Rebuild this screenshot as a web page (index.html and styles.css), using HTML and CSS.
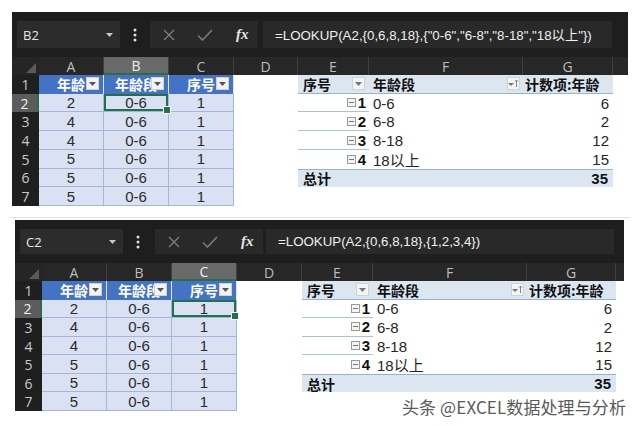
FILE: index.html
```html
<!DOCTYPE html>
<html lang="zh">
<head>
<meta charset="utf-8">
<title>LOOKUP</title>
<link rel="stylesheet" href="styles.css">
</head>
<body>
<section class="shot shot-top">
  <div class="fbar">
    <div class="namebox"><span>B2</span><svg class="caret" width="7" height="4" viewBox="0 0 7 4"><path d="M0 0h7L3.5 4z" fill="#c8c8c8"/></svg></div>
    <svg class="vdots" width="4" height="14" viewBox="0 0 4 14"><circle cx="2" cy="2" r="1.5" fill="#e0e0e0"/><circle cx="2" cy="7" r="1.5" fill="#e0e0e0"/><circle cx="2" cy="12" r="1.5" fill="#e0e0e0"/></svg>
    <div class="fbtns">
      <svg width="12" height="12" viewBox="0 0 12 12"><path d="M1 1L11 11M11 1L1 11" stroke="#7c7c7c" stroke-width="1.4"/></svg>
      <svg width="16" height="12" viewBox="0 0 16 12"><path d="M1 6.5L5.5 11L15 1" stroke="#7c7c7c" stroke-width="1.6" fill="none"/></svg>
      <span class="fx">fx</span>
    </div>
    <div class="finput">=LOOKUP(A2,{0,6,8,18},{"0-6","6-8","8-18","18以上"})</div>
  </div>
  <div class="grid">
    <div class="corner"><svg width="10" height="10" viewBox="0 0 10 10"><path d="M10 0V10H0z" fill="#5a5a5a"/></svg></div>
    <div class="ch">A</div><div class="ch ch-sel">B</div><div class="ch">C</div><div class="ch">D</div><div class="ch">E</div><div class="ch">F</div><div class="ch">G</div><div class="ch ch-fill"></div>

    <div class="rh">1</div>
    <div class="th">年龄<span class="dd"><svg width="7" height="4" viewBox="0 0 7 4"><path d="M0 0h7L3.5 4z" fill="#555"/></svg></span></div>
    <div class="th">年龄段<span class="dd"><svg width="7" height="4" viewBox="0 0 7 4"><path d="M0 0h7L3.5 4z" fill="#555"/></svg></span></div>
    <div class="th">序号<span class="dd"><svg width="7" height="4" viewBox="0 0 7 4"><path d="M0 0h7L3.5 4z" fill="#555"/></svg></span></div>
    <div class="blank"></div>
    <div class="ph ph-e">序号<span class="pbtn"><svg width="7" height="4" viewBox="0 0 7 4"><path d="M0 0h7L3.5 4z" fill="#777"/></svg></span></div>
    <div class="ph ph-f">年龄段<span class="pbtn"><svg width="11" height="9" viewBox="0 0 11 9"><path d="M0 4h6L3 7z" fill="#777"/><path d="M8.5 1V8M7 2.5L8.5 1L10 2.5" stroke="#777" stroke-width="0.9" fill="none"/></svg></span></div>
    <div class="ph ph-g">计数项:年龄</div>
    <div class="blank"></div>

    <div class="rh rh-sel">2</div>
    <div class="td">2</div><div class="td sel">0-6</div><div class="td">1</div><div class="blank"></div>
    <div class="pe pe-line"><svg class="mbox" width="9" height="9" viewBox="0 0 9 9"><rect x="0.5" y="0.5" width="8" height="8" fill="#f4f4f4" stroke="#9a9a9a"/><path d="M2 4.5h5" stroke="#777"/></svg><b>1</b></div>
    <div class="pf">0-6</div><div class="pg">6</div><div class="blank"></div>

    <div class="rh">3</div>
    <div class="td">4</div><div class="td">0-6</div><div class="td">1</div><div class="blank"></div>
    <div class="pe pe-line"><svg class="mbox" width="9" height="9" viewBox="0 0 9 9"><rect x="0.5" y="0.5" width="8" height="8" fill="#f4f4f4" stroke="#9a9a9a"/><path d="M2 4.5h5" stroke="#777"/></svg><b>2</b></div>
    <div class="pf">6-8</div><div class="pg">2</div><div class="blank"></div>

    <div class="rh">4</div>
    <div class="td">4</div><div class="td">0-6</div><div class="td">1</div><div class="blank"></div>
    <div class="pe pe-line"><svg class="mbox" width="9" height="9" viewBox="0 0 9 9"><rect x="0.5" y="0.5" width="8" height="8" fill="#f4f4f4" stroke="#9a9a9a"/><path d="M2 4.5h5" stroke="#777"/></svg><b>3</b></div>
    <div class="pf">8-18</div><div class="pg">12</div><div class="blank"></div>

    <div class="rh">5</div>
    <div class="td">5</div><div class="td">0-6</div><div class="td">1</div><div class="blank"></div>
    <div class="pe"><svg class="mbox" width="9" height="9" viewBox="0 0 9 9"><rect x="0.5" y="0.5" width="8" height="8" fill="#f4f4f4" stroke="#9a9a9a"/><path d="M2 4.5h5" stroke="#777"/></svg><b>4</b></div>
    <div class="pf">18以上</div><div class="pg">15</div><div class="blank"></div>

    <div class="rh">6</div>
    <div class="td">5</div><div class="td">0-6</div><div class="td">1</div><div class="blank"></div>
    <div class="pt pt-l">总计</div><div class="pt"></div><div class="pt pt-r">35</div><div class="blank"></div>

    <div class="rh">7</div>
    <div class="td">5</div><div class="td">0-6</div><div class="td">1</div><div class="blank"></div>
    <div class="blank"></div><div class="blank"></div><div class="blank"></div><div class="blank"></div>
  </div>
</section>

<div class="sep"></div>

<section class="shot shot-bottom">
  <div class="fbar">
    <div class="namebox"><span>C2</span><svg class="caret" width="7" height="4" viewBox="0 0 7 4"><path d="M0 0h7L3.5 4z" fill="#c8c8c8"/></svg></div>
    <svg class="vdots" width="4" height="14" viewBox="0 0 4 14"><circle cx="2" cy="2" r="1.5" fill="#e0e0e0"/><circle cx="2" cy="7" r="1.5" fill="#e0e0e0"/><circle cx="2" cy="12" r="1.5" fill="#e0e0e0"/></svg>
    <div class="fbtns">
      <svg width="12" height="12" viewBox="0 0 12 12"><path d="M1 1L11 11M11 1L1 11" stroke="#7c7c7c" stroke-width="1.4"/></svg>
      <svg width="16" height="12" viewBox="0 0 16 12"><path d="M1 6.5L5.5 11L15 1" stroke="#7c7c7c" stroke-width="1.6" fill="none"/></svg>
      <span class="fx">fx</span>
    </div>
    <div class="finput">=LOOKUP(A2,{0,6,8,18},{1,2,3,4})</div>
  </div>
  <div class="grid">
    <div class="corner"><svg width="10" height="10" viewBox="0 0 10 10"><path d="M10 0V10H0z" fill="#5a5a5a"/></svg></div>
    <div class="ch">A</div><div class="ch">B</div><div class="ch ch-sel">C</div><div class="ch">D</div><div class="ch">E</div><div class="ch">F</div><div class="ch">G</div><div class="ch ch-fill"></div>

    <div class="rh">1</div>
    <div class="th">年龄<span class="dd"><svg width="7" height="4" viewBox="0 0 7 4"><path d="M0 0h7L3.5 4z" fill="#555"/></svg></span></div>
    <div class="th">年龄段<span class="dd"><svg width="7" height="4" viewBox="0 0 7 4"><path d="M0 0h7L3.5 4z" fill="#555"/></svg></span></div>
    <div class="th">序号<span class="dd"><svg width="7" height="4" viewBox="0 0 7 4"><path d="M0 0h7L3.5 4z" fill="#555"/></svg></span></div>
    <div class="blank"></div>
    <div class="ph ph-e">序号<span class="pbtn"><svg width="7" height="4" viewBox="0 0 7 4"><path d="M0 0h7L3.5 4z" fill="#777"/></svg></span></div>
    <div class="ph ph-f">年龄段<span class="pbtn"><svg width="11" height="9" viewBox="0 0 11 9"><path d="M0 4h6L3 7z" fill="#777"/><path d="M8.5 1V8M7 2.5L8.5 1L10 2.5" stroke="#777" stroke-width="0.9" fill="none"/></svg></span></div>
    <div class="ph ph-g">计数项:年龄</div>
    <div class="blank"></div>

    <div class="rh rh-sel">2</div>
    <div class="td">2</div><div class="td">0-6</div><div class="td sel">1</div><div class="blank"></div>
    <div class="pe pe-line"><svg class="mbox" width="9" height="9" viewBox="0 0 9 9"><rect x="0.5" y="0.5" width="8" height="8" fill="#f4f4f4" stroke="#9a9a9a"/><path d="M2 4.5h5" stroke="#777"/></svg><b>1</b></div>
    <div class="pf">0-6</div><div class="pg">6</div><div class="blank"></div>

    <div class="rh">3</div>
    <div class="td">4</div><div class="td">0-6</div><div class="td">1</div><div class="blank"></div>
    <div class="pe pe-line"><svg class="mbox" width="9" height="9" viewBox="0 0 9 9"><rect x="0.5" y="0.5" width="8" height="8" fill="#f4f4f4" stroke="#9a9a9a"/><path d="M2 4.5h5" stroke="#777"/></svg><b>2</b></div>
    <div class="pf">6-8</div><div class="pg">2</div><div class="blank"></div>

    <div class="rh">4</div>
    <div class="td">4</div><div class="td">0-6</div><div class="td">1</div><div class="blank"></div>
    <div class="pe pe-line"><svg class="mbox" width="9" height="9" viewBox="0 0 9 9"><rect x="0.5" y="0.5" width="8" height="8" fill="#f4f4f4" stroke="#9a9a9a"/><path d="M2 4.5h5" stroke="#777"/></svg><b>3</b></div>
    <div class="pf">8-18</div><div class="pg">12</div><div class="blank"></div>

    <div class="rh">5</div>
    <div class="td">5</div><div class="td">0-6</div><div class="td">1</div><div class="blank"></div>
    <div class="pe"><svg class="mbox" width="9" height="9" viewBox="0 0 9 9"><rect x="0.5" y="0.5" width="8" height="8" fill="#f4f4f4" stroke="#9a9a9a"/><path d="M2 4.5h5" stroke="#777"/></svg><b>4</b></div>
    <div class="pf">18以上</div><div class="pg">15</div><div class="blank"></div>

    <div class="rh">6</div>
    <div class="td">5</div><div class="td">0-6</div><div class="td">1</div><div class="blank"></div>
    <div class="pt pt-l">总计</div><div class="pt"></div><div class="pt pt-r">35</div><div class="blank"></div>

    <div class="rh">7</div>
    <div class="td">5</div><div class="td">0-6</div><div class="td">1</div><div class="blank"></div>
    <div class="blank"></div><div class="blank"></div><div class="blank"></div><div class="blank"></div>
  </div>
</section>

<div class="watermark">头条 @EXCEL数据处理与分析</div>
</body>
</html>
```

FILE: styles.css
```css
* { box-sizing: border-box; }

body {
  margin: 0;
  width: 640px;
  height: 426px;
  overflow: hidden;
  position: relative;
  background: #ffffff;
  font-family: "Liberation Sans", "Noto Sans CJK SC", sans-serif;
}

.shot {
  background: #1e1e1e;
}

.shot-top {
  margin: 12px 0 0 12px;
  width: 616px;
}

.shot-bottom {
  margin: 2px 0 0 15px;
  width: 609px;
}

.sep {
  margin: 11px 10px 0 10px;
  height: 1px;
  background: #e2e2e2;
}

/* formula bar */
.fbar {
  height: 45px;
  display: flex;
  align-items: center;
  padding-left: 5px;
}

.shot-bottom .fbar {
  height: 43px;
}

.namebox {
  width: 103px;
  height: 27px;
  background: #2c2c2c;
  display: flex;
  align-items: center;
  justify-content: space-between;
  padding: 0 7px 0 6px;
  color: #e6e6e6;
  font-family: "Open Sans", "Liberation Sans", sans-serif;
  font-size: 13px;
}

.shot-bottom .namebox {
  height: 25px;
}

.vdots {
  margin-left: 13px;
}

.fbtns {
  margin-left: 13px;
  width: 108px;
  height: 27px;
  background: #292929;
  display: flex;
  align-items: center;
  padding-left: 13px;
  gap: 22px;
}

.shot-bottom .fbtns {
  height: 25px;
  margin-left: 15px;
}

.fx {
  font-family: "Liberation Serif", serif;
  font-style: italic;
  font-weight: bold;
  font-size: 15px;
  color: #e6e6e6;
  margin-left: 1px;
}

.finput {
  flex: 1;
  margin-left: 5px;
  margin-right: 16px;
  height: 27px;
  background: #292929;
  display: flex;
  align-items: center;
  padding-left: 12px;
  color: #f0f0f0;
  font-family: "Liberation Sans", "Noto Sans CJK SC", sans-serif;
  font-size: 13.3px;
  white-space: nowrap;
  overflow: hidden;
}

.shot-bottom .finput {
  height: 25px;
  margin-left: 3px;
  margin-right: 10px;
}

/* grid */
.grid {
  display: grid;
  grid-template-columns: 27px 65px 65px 65px 64px 71px 154px 90px 15px;
  grid-template-rows: 18px repeat(7, 18.72px);
}

.shot-bottom .grid {
  grid-template-columns: 27px 65px 65px 65px 65px 71px 154px 89px 8px;
  grid-template-rows: 18px repeat(7, 18.57px);
}

.grid > div {
  display: flex;
  align-items: center;
  white-space: nowrap;
  overflow: hidden;
  font-size: 14px;
  color: #262626;
  background: #ffffff;
}

.corner {
  background: #252525 !important;
  justify-content: flex-end;
  align-items: flex-end !important;
  padding: 0 3px 2px 0;
}

.grid > .ch {
  background: #272727;
  border-right: 1px solid #3f3f3f;
  justify-content: center;
  color: #bdbdbd;
  font-family: "Open Sans", "Liberation Sans", sans-serif;
  font-size: 14px;
}

.grid > .ch-sel {
  background: #696969;
  color: #f0f0f0;
  border-bottom: 2px solid #2b6e45;
}

.grid > .ch-fill {
  border-right: none;
}

.grid > .rh {
  background: #1f1f1f;
  justify-content: center;
  color: #c9c9c9;
  font-family: "Open Sans", "Liberation Sans", sans-serif;
  font-size: 14px;
}

.grid > .rh-sel {
  background: #5c5c5c;
  color: #f2f2f2;
  border-right: 2px solid #2b6e45;
}

/* excel table */
.grid > .th {
  position: relative;
  background: #4472c4;
  color: #ffffff;
  font-family: "Noto Sans CJK SC", sans-serif;
  font-weight: bold;
  justify-content: center;
  border-right: 1px solid #dfe6f3;
}

.dd {
  position: absolute;
  right: 4px;
  top: 2px;
  width: 13px;
  height: 13px;
  background: #f3f3f3;
  border: 1px solid #d0d0d0;
  display: flex;
  align-items: center;
  justify-content: center;
}

.grid > .td {
  background: #d9e1f2;
  border-right: 1px solid #a3b7de;
  border-bottom: 1px solid #a3b7de;
  justify-content: center;
  font-size: 15px;
  color: #2b2b2b;
}

.grid > .sel {
  position: relative;
  overflow: visible;
  box-shadow: inset 0 0 0 2px #217346;
}

.sel::after {
  content: "";
  position: absolute;
  right: -3px;
  bottom: -3px;
  width: 6px;
  height: 6px;
  background: #217346;
  border: 1px solid #ffffff;
  z-index: 2;
}

/* pivot */
.grid > .ph {
  background: #dce6f1;
  border-bottom: 1px solid #95b3d7;
  font-family: "Noto Sans CJK SC", sans-serif;
  font-weight: bold;
  color: #111;
}

.grid > .ph-e {
  justify-content: space-between;
  padding: 0 4px 0 5px;
}

.grid > .ph-f {
  justify-content: space-between;
  padding: 0 3px 0 4px;
}

.grid > .ph-g {
  padding-left: 2px;
}

.pbtn {
  width: 13px;
  height: 13px;
  background: #f4f4f4;
  border: 1px solid #d2d2d2;
  display: flex;
  align-items: center;
  justify-content: center;
}

.grid > .pe {
  justify-content: flex-end;
  padding-right: 3px;
  gap: 2px;
}

.pe b {
  font-size: 15px;
  color: #111;
}

.grid > .pe-line {
  border-bottom: 1px solid #a9bfe3;
}

.grid > .pf {
  padding-left: 4px;
  font-size: 15px;
  color: #262626;
}

.grid > .pg {
  justify-content: flex-end;
  padding-right: 4px;
  font-size: 15px;
}

.grid > .pt {
  background: #dce6f1;
  border-top: 1px solid #95b3d7;
  font-weight: bold;
  font-family: "Noto Sans CJK SC", sans-serif;
  color: #111;
}

.grid > .pt-l {
  padding-left: 5px;
}

.grid > .pt-r {
  justify-content: flex-end;
  padding-right: 5px;
  font-family: "Liberation Sans", sans-serif;
  font-size: 15px;
}

.watermark {
  position: absolute;
  left: 402px;
  top: 394px;
  font-family: "Noto Sans CJK SC", sans-serif;
  font-size: 17px;
  color: #5a5a5a;
  white-space: nowrap;
  letter-spacing: 0.1px;
}
```
